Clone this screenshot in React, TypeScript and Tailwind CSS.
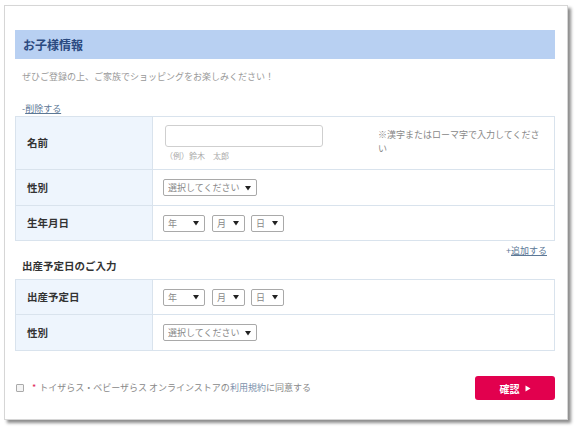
import React from 'react';

const font = { fontFamily: '"Noto Sans CJK JP", "Noto Sans", sans-serif' };

function Arrow() {
  return (
    <svg width="6" height="6" viewBox="0 0 6 6" className="shrink-0">
      <path d="M0 1h6L3 5.5z" fill="#222" />
    </svg>
  );
}

function FakeSelect({ label, width }: { label: string; width: string }) {
  return (
    <div
      className={`${width} h-[17px] border border-[#a9a9a9] rounded-[2px] bg-white flex items-center justify-between pl-[4px] pr-[5px] text-[9px] text-[#888] leading-none`}
    >
      <span>{label}</span>
      <Arrow />
    </div>
  );
}

function DateSelects() {
  return (
    <div className="flex items-center">
      <FakeSelect label="年" width="w-[42px]" />
      <div className="ml-[7px]">
        <FakeSelect label="月" width="w-[33px]" />
      </div>
      <div className="ml-[6px]">
        <FakeSelect label="日" width="w-[33px]" />
      </div>
    </div>
  );
}

function Row({
  label,
  height,
  last,
  children,
}: {
  label: string;
  height: string;
  last?: boolean;
  children: React.ReactNode;
}) {
  return (
    <div className={`flex ${height} ${last ? '' : 'border-b border-[#d9e3ed]'}`}>
      <div className="w-[137px] shrink-0 bg-[#eef5fd] border-r border-[#d9e3ed] flex items-center pl-[11px] text-[10.5px] font-bold text-[#333]">
        {label}
      </div>
      <div className="flex-1 flex items-center pl-[10px]">{children}</div>
    </div>
  );
}

export default function App() {
  return (
    <div className="w-[580px] h-[431px] bg-white pt-[5px] pl-[4px]" style={font}>
      <div className="w-[564px] h-[415px] bg-white border border-[#d6d6d6] shadow-[3px_3px_3px_rgba(0,0,0,0.45)] pl-[10px] pr-[12px] pt-[24px]">
        {/* header */}
        <div className="h-[29px] bg-[#b8d0f2] flex items-center pl-[8px] text-[12px] font-bold text-[#2b4a80]">
          お子様情報
        </div>
        <p className="mt-[11px] pl-[7px] leading-[14px] text-[9px] text-[#999]">
          ぜひご登録の上、ご家族でショッピングをお楽しみください！
        </p>
        <div className="mt-[18px] pl-[7px] leading-[14px] text-[9px] text-[#5c7896]">
          -<span className="underline">削除する</span>
        </div>

        {/* table 1 */}
        <div className="border border-[#d9e3ed]">
          <Row label="名前" height="h-[53px]">
            <div className="flex items-start h-full pt-[8px]">
              <div className="ml-[2px] w-[158px]">
                <div className="h-[22px] border border-[#cfcfcf] rounded-[3px] bg-white" />
                <div className="mt-[3px] text-[8px] text-[#aaa] leading-[12px]">（例）鈴木　太郎</div>
              </div>
              <div className="ml-[55px] w-[170px] pt-[3px] text-[9px] leading-[14px] text-[#888]">
                ※漢字またはローマ字で入力してください
              </div>
            </div>
          </Row>
          <Row label="性別" height="h-[36px]">
            <FakeSelect label="選択してください" width="w-[94px]" />
          </Row>
          <Row label="生年月日" height="h-[34px]" last>
            <DateSelects />
          </Row>
        </div>

        <div className="mt-[3px] pr-[8px] leading-[14px] text-[9px] text-[#5c7896] text-right">
          +<span className="underline">追加する</span>
        </div>
        <div className="mt-[1px] pl-[7px] leading-[14px] text-[10.5px] font-bold text-[#333]">
          出産予定日のご入力
        </div>

        {/* table 2 */}
        <div className="mt-[6px] border border-[#d9e3ed]">
          <Row label="出産予定日" height="h-[35px]">
            <DateSelects />
          </Row>
          <Row label="性別" height="h-[35px]" last>
            <FakeSelect label="選択してください" width="w-[94px]" />
          </Row>
        </div>

        {/* footer */}
        <div className="mt-[25px] flex items-center justify-between h-[24px]">
          <div className="flex items-center text-[9px] text-[#888]">
            <div className="ml-[1px] w-[8px] h-[8px] border border-[#aaa] rounded-[1px] bg-[#f4f4f4]" />
            <span className="ml-[8px] mr-[3px] text-[#e0285a]">*</span>
            <span>
              トイザらス・ベビーザらス オンラインストアの<span className="text-[#7d93ad]">利用規約</span>に同意する
            </span>
          </div>
          <button className="w-[80px] h-[24px] rounded-[3px] bg-[#e2004e] flex items-center justify-center gap-[5px] text-[10px] font-bold text-white">
            確認
            <svg width="6" height="7" viewBox="0 0 6 7">
              <path d="M0.5 0.5v6L5.5 3.5z" fill="#fff" />
            </svg>
          </button>
        </div>
      </div>
    </div>
  );
}
